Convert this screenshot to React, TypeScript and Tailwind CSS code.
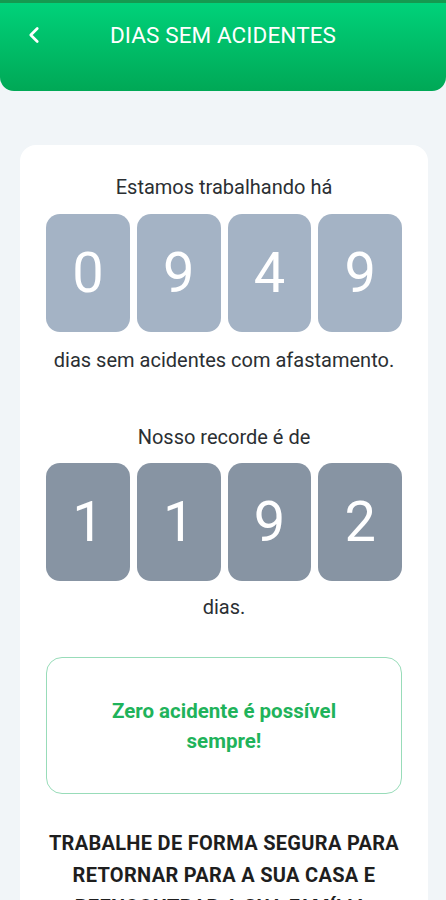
import React from "react";
import { ChevronLeft } from "lucide-react";

const Digit = ({ d, dark }: { d: string; dark?: boolean }) => (
  <div
    className={`h-[118px] rounded-[14px] flex items-center justify-center text-white text-[56px] font-normal leading-none ${
      dark ? "bg-[#8794a3]" : "bg-[#a4b3c5]"
    }`}
  >
    {d}
  </div>
);

export default function App() {
  return (
    <div
      className="w-[446px] min-h-[900px] bg-[#f1f5f8] overflow-hidden"
      style={{ fontFamily: "Roboto, 'Noto Sans', sans-serif" }}
    >
      <div className="h-[91px] rounded-b-[14px] border-t-[3px] border-[#159a50] bg-gradient-to-b from-[#00d27a] to-[#00a856]">
        <div className="relative h-[66px] flex items-center justify-center">
          <ChevronLeft
            className="absolute left-[21px] top-[19px] text-white"
            size={26}
            strokeWidth={2.5}
          />
          <span className="text-white text-[22.5px] tracking-[0.1px]">DIAS SEM ACIDENTES</span>
        </div>
      </div>

      <div className="ml-[20px] mr-[18px] mt-[54px] bg-white rounded-[16px] px-[26px] pt-[30px] pb-[20px] flex flex-col items-center">
        <div className="text-[20px] leading-[24px] text-[#2b2f33]">Estamos trabalhando há</div>
        <div className="w-full grid grid-cols-4 gap-[7px] mt-[15px]">
          {["0", "9", "4", "9"].map((d, i) => (
            <Digit key={i} d={d} />
          ))}
        </div>
        <div className="mt-[16px] text-[20px] leading-[24px] text-[#2b2f33] whitespace-nowrap">
          dias sem acidentes com afastamento.
        </div>

        <div className="mt-[53px] text-[20px] leading-[24px] text-[#2b2f33]">Nosso recorde é de</div>
        <div className="w-full grid grid-cols-4 gap-[7px] mt-[14px]">
          {["1", "1", "9", "2"].map((d, i) => (
            <Digit key={i} d={d} dark />
          ))}
        </div>
        <div className="mt-[14px] text-[20px] leading-[24px] text-[#2b2f33]">dias.</div>

        <div className="mt-[38px] w-full h-[137px] rounded-[16px] border border-[#98dcb9] flex items-center justify-center px-[20px]">
          <div className="text-center text-[20.5px] leading-[30px] font-bold text-[#1fb35b]">
            Zero acidente é possível
            <br />
            sempre!
          </div>
        </div>

        <div className="mt-[33px] text-center text-[20px] leading-[32px] font-bold text-[#1e1e1e] tracking-[0.3px] whitespace-nowrap">
          TRABALHE DE FORMA SEGURA PARA
          <br />
          RETORNAR PARA A SUA CASA E
          <br />
          REENCONTRAR A SUA FAMÍLIA.
        </div>
      </div>
    </div>
  );
}
